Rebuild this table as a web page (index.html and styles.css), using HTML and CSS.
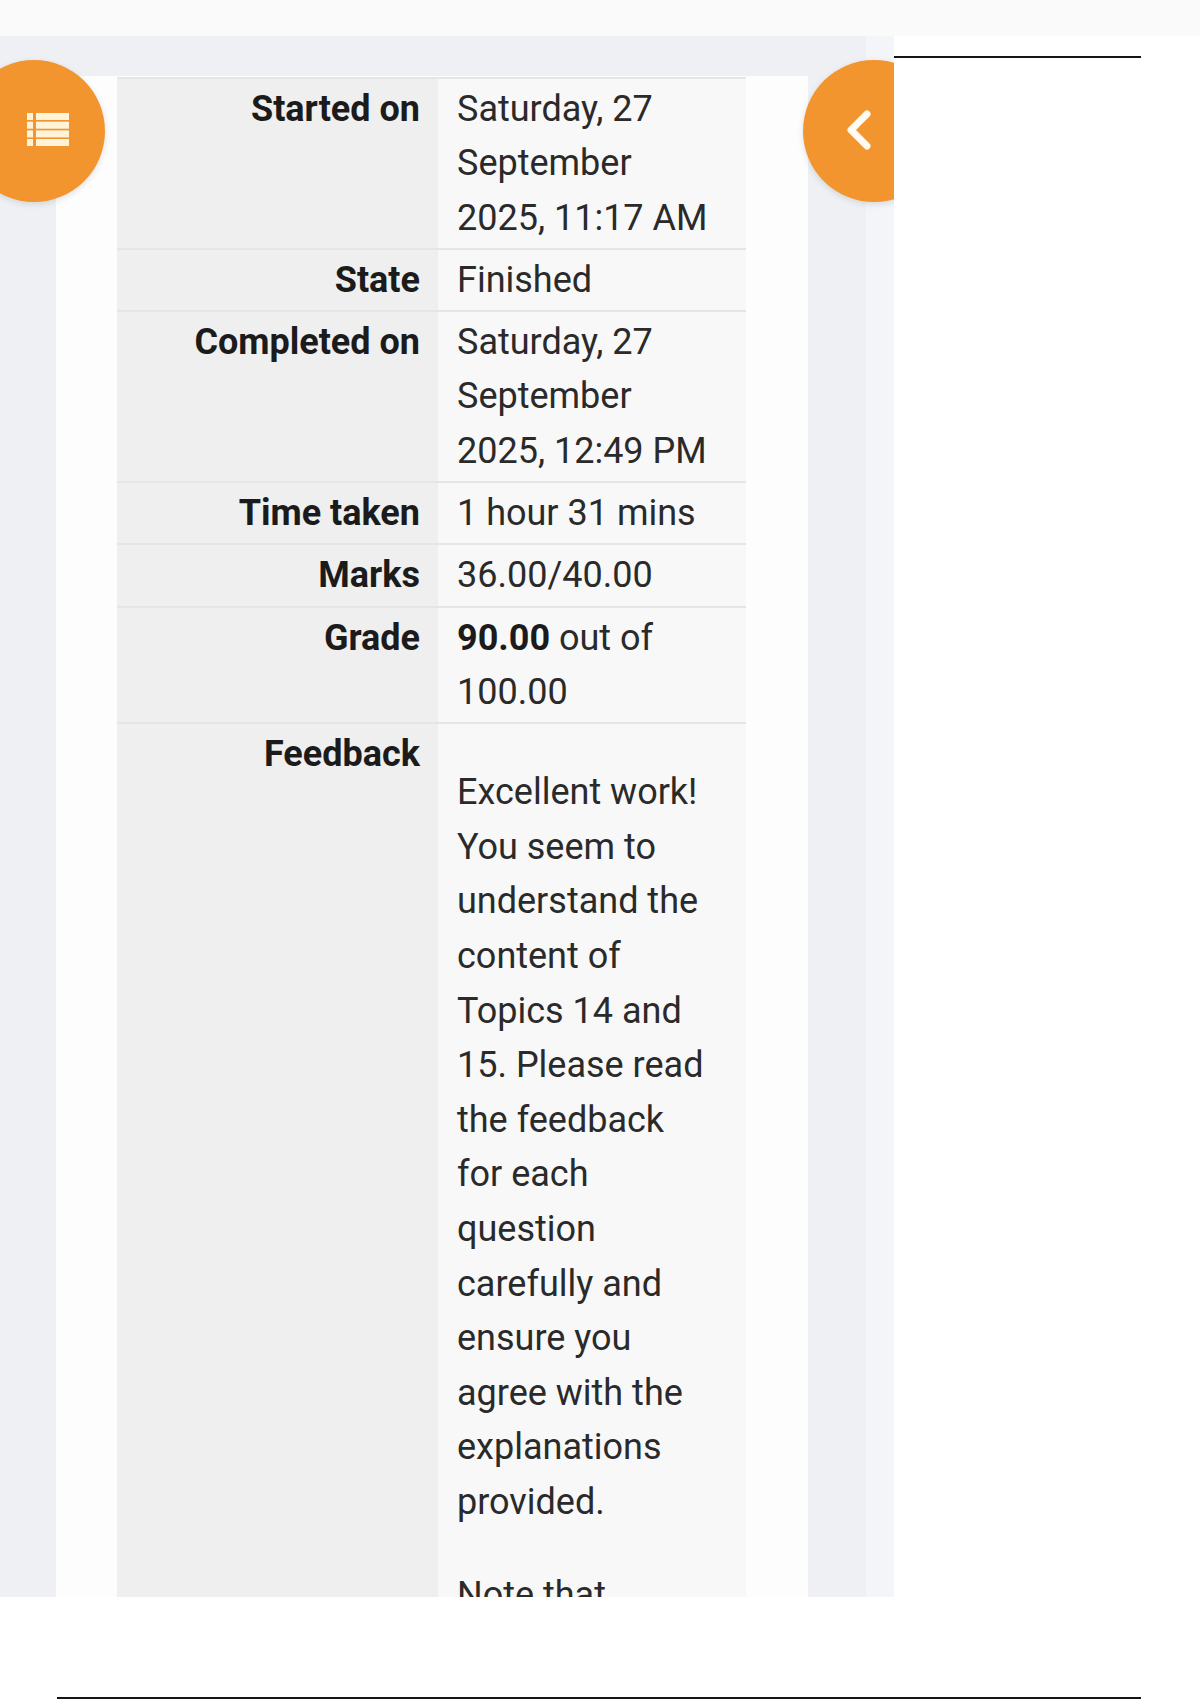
FILE: index.html
```html
<!DOCTYPE html>
<html lang="en">
<head>
<meta charset="utf-8">
<title>Quiz review summary</title>
<link rel="stylesheet" href="styles.css">
</head>
<body>
<div class="top-strip"></div>
<div class="main-row">
  <div class="screen">
    <div class="gutter-left"></div>
    <div class="card">
      <table class="summary">
        <tbody>
          <tr><th>Started on</th><td>Saturday, 27 September 2025, 11:17 AM</td></tr>
          <tr><th>State</th><td>Finished</td></tr>
          <tr><th>Completed on</th><td>Saturday, 27 September 2025, 12:49 PM</td></tr>
          <tr><th>Time taken</th><td>1 hour 31 mins</td></tr>
          <tr><th>Marks</th><td>36.00/40.00</td></tr>
          <tr><th>Grade</th><td><b>90.00</b> out of 100.00</td></tr>
          <tr class="feedback-row"><th>Feedback</th><td>
            <p>Excellent work! You seem to understand the content of Topics 14 and 15. Please read the feedback for each question carefully and ensure you agree with the explanations provided.</p>
            <p>Note that explanations for each question are shown below.</p>
          </td></tr>
        </tbody>
      </table>
    </div>
    <div class="gutter-right"><div class="gutter-right-inner"></div><div class="gutter-right-edge"></div></div>

    <button class="fab fab-left" aria-label="Open course index">
      <svg class="icon-list" width="42" height="33" viewBox="0 0 42 33">
        <rect x="0" y="0" width="6" height="7"/><rect x="9" y="0" width="33" height="7"/>
        <rect x="0" y="8.7" width="6" height="7"/><rect x="9" y="8.7" width="33" height="7"/>
        <rect x="0" y="17.4" width="6" height="7"/><rect x="9" y="17.4" width="33" height="7"/>
        <rect x="0" y="26" width="6" height="7"/><rect x="9" y="26" width="33" height="7"/>
      </svg>
    </button>
    <button class="fab fab-right" aria-label="Open block drawer">
      <svg class="icon-chevron" width="40" height="50" viewBox="0 0 40 50">
        <polyline points="28,8 12,24 28,40"/>
      </svg>
    </button>
  </div>
  <div class="aside">
    <div class="rule-top"></div>
  </div>
</div>
<div class="doc-bottom">
  <div class="rule-bottom"></div>
</div>
</body>
</html>
```
FILE: styles.css
```css
* { box-sizing: border-box; }

html, body {
  margin: 0;
  padding: 0;
  background: #ffffff;
}

body {
  width: 1200px;
  height: 1700px;
  overflow: hidden;
  font-family: Roboto, "Liberation Sans", Arial, sans-serif;
  color: #1d2125;
}

.top-strip {
  height: 36px;
  background: #fafafb;
}

.main-row {
  display: flex;
  height: 1561px;
}

.screen {
  position: relative;
  width: 894px;
  height: 1561px;
  overflow: hidden;
  background: #eef0f4;
  display: flex;
  align-items: flex-start;
}

.gutter-left {
  width: 56px;
  flex: none;
}

.card {
  width: 752px;
  flex: none;
  margin-top: 40px;
  height: 1521px;
  background: #fdfdfd;
  padding: 1px 0 0 61px;
}

.gutter-right {
  flex: none;
  width: 86px;
  align-self: stretch;
  display: flex;
}

.gutter-right-inner {
  width: 58px;
  background: #eef0f4;
}

.gutter-right-edge {
  width: 28px;
  background: #f4f5f8;
}

.summary {
  width: 629px;
  border-collapse: collapse;
  font-size: 36px;
  line-height: 54.3px;
}

.summary th,
.summary td {
  vertical-align: top;
  border-top: 2px solid #e5e5e5;
  padding: 3px 0;
}

.summary th {
  width: 321px;
  text-align: right;
  font-weight: 700;
  color: #1b1b1b;
  background: #efefef;
  padding-right: 18px;
}

.summary td {
  width: 308px;
  text-align: left;
  font-weight: 400;
  color: #2a2a2a;
  background: #f8f8f8;
  padding-left: 19px;
  padding-right: 30px;
}

.summary td b {
  font-weight: 700;
  color: #1b1b1b;
}

.summary td p {
  margin: 38px 0 0 0;
  line-height: 54.6px;
}

.fab {
  position: absolute;
  top: 24px;
  width: 142px;
  height: 142px;
  border: 0;
  padding: 0;
  border-radius: 50%;
  background: #f2952f;
  box-shadow: 0 2px 6px rgba(0, 0, 0, 0.12);
  display: flex;
  align-items: flex-start;
  justify-content: flex-start;
  cursor: pointer;
}

.fab-left {
  left: -37px;
}

.fab-right {
  left: 803px;
}

.icon-list {
  display: block;
  flex: none;
  margin: 53px 0 0 64px;
  fill: #fff3d9;
}

.icon-chevron {
  display: block;
  flex: none;
  margin: 46px 0 0 36px;
  fill: none;
  stroke: #fffaf2;
  stroke-width: 7;
  stroke-linecap: round;
  stroke-linejoin: round;
}

.aside {
  width: 306px;
  flex: none;
}

.rule-top {
  margin-top: 20px;
  width: 247px;
  height: 2px;
  background: #151515;
}

.doc-bottom {
  height: 103px;
  padding: 100px 0 0 57px;
}

.rule-bottom {
  width: 1084px;
  height: 2px;
  background: #151515;
}
```
